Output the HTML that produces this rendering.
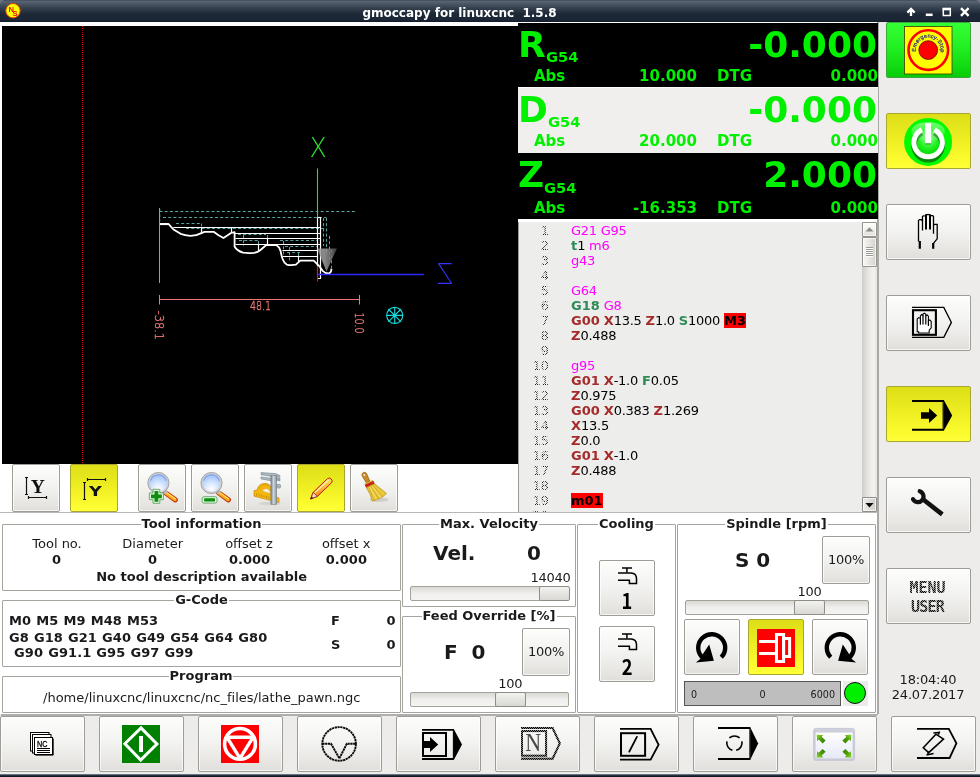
<!DOCTYPE html>
<html lang="en">
<head>
<meta charset="utf-8">
<title>gmoccapy for linuxcnc 1.5.8</title>
<style>
*{box-sizing:border-box;margin:0;padding:0}
html,body{width:980px;height:777px;overflow:hidden;background:#fff}
body{position:relative;will-change:transform;font-family:"DejaVu Sans","Liberation Sans",sans-serif;font-size:13px;color:#1a1a1a;line-height:16px}
.abs{position:absolute}
b,.b{font-weight:bold}
/* title bar */
#titlebar{left:0;top:0;width:980px;height:22px;background:linear-gradient(#3c4757 0,#5a6472 6%,#4a5564 18%,#36414f 36%,#283342 52%,#1c2736 66%,#1b2636 92%,#131b27 100%)}
#title{left:0;top:5px;width:919px;text-align:center;color:#fff;font-weight:bold;font-size:12px;line-height:16px;white-space:pre}
/* right column */
#rightcol{left:879px;top:22px;width:101px;height:693px;background:#edeceb}
#vsep{left:877px;top:22px;width:2px;height:693px;background:#a9a9a6}
#bottomrow{left:0;top:714px;width:980px;height:60px;background:#edeceb}
#bottombar{left:0;top:774px;width:980px;height:3px;background:linear-gradient(#9ba1a8 0,#2c3747 38%,#151d29 70%,#0c1118 100%)}
/* gtk button */
.btn{position:absolute;border:1px solid #9e9d95;border-radius:2px;background:linear-gradient(#fdfdfc 0,#f3f3f1 45%,#e8e7e4 80%,#dfdeda 100%);box-shadow:inset 0 0 0 1px rgba(255,255,255,.7)}
.btn.yel{background:linear-gradient(#dede18 0,#eded22 45%,#fbfb2e 85%,#ffff3a 100%);border-color:#a8a830;box-shadow:none}
.btn.grn{background:linear-gradient(#35ff35 0,#22f022 45%,#0fd80f 85%,#08cc08 100%);border-color:#3aa83a;box-shadow:none}
.btn svg{position:absolute;overflow:visible}
/* GL canvas */
#gl{left:2px;top:26px;width:516px;height:438px;background:#000}
/* DRO */
.dro{left:518px;width:360px;height:66px;color:#00f000;font-weight:bold}
.dro .ax{left:0px;top:1px;font-size:36px;line-height:40px}
.dro .sys{top:25px;font-size:14.67px;line-height:18px}
.dro .big{right:1px;top:1px;font-size:36px;line-height:40px;text-align:right}
.dro .sm{top:44px;font-size:15px;line-height:17px}
/* source view */
#src{left:518px;top:222px;width:359px;height:290px;background:#ededec;overflow:hidden;border-left:1px solid #9b9a94}
#src .ln{position:absolute;left:0;width:30px;text-align:right;color:transparent;background:repeating-conic-gradient(#222 0 25%,rgba(0,0,0,0) 0 50%) 0 0/2px 2px;-webkit-background-clip:text;background-clip:text;height:15px;line-height:15px;font-size:13px}
#src .tx{position:absolute;left:52px;letter-spacing:-0.26px;height:15px;line-height:15px;font-size:13px;white-space:pre;color:#000}
.mg{color:#f0f}
.br{color:#a52a2a;font-weight:bold;letter-spacing:0}
.gn{color:#2e8b57;font-weight:bold;letter-spacing:0}
.rd{background:#f00;color:#000;font-weight:bold;letter-spacing:0;display:inline-block;height:15px}
/* frames */
.frame{position:absolute;border:1px solid #a6a59d;border-radius:1px}
.flabel{position:absolute;top:-9px;left:0;right:0;text-align:center;height:16px;line-height:16px;font-weight:bold;font-size:13px}
.flabel span{background:#fff;padding:0 1px}
.trough{position:absolute;border:1px solid #a3a299;border-radius:2px;background:linear-gradient(#d9d8d4,#f0efed 50%,#f4f4f2)}
.thumb{position:absolute;top:-1px;height:15px;border:1px solid #8f8e86;border-radius:2px;background:linear-gradient(#f2f2f0,#d9d8d3)}
.stip{color:rgba(0,0,0,.42);background:repeating-conic-gradient(#111 0 25%,rgba(0,0,0,0) 0 50%) 0 0/2px 2px;-webkit-background-clip:text;background-clip:text}
.t{position:absolute;white-space:pre;line-height:16px}
.c{text-align:center}
</style>
</head>
<body>
<div id="titlebar" class="abs"></div>
<div id="title" class="abs">gmoccapy for linuxcnc  1.5.8</div>
<svg class="abs" style="left:0;top:0" width="980" height="22" viewBox="0 0 980 22">
 <path d="M0 0 H4 Q1 0.8 0 4Z" fill="#6b7480"/>
 <path d="M980 0 H976 Q979 0.8 980 4Z" fill="#6b7480"/>
 <circle cx="13" cy="10.7" r="7.2" fill="#ffff00" stroke="#e8380a" stroke-width="1"/>
 <text x="8.6" y="11.6" font-family="Liberation Sans,DejaVu Sans,sans-serif" font-weight="bold" font-size="7.6" fill="#e81010">N</text>
 <text x="12.6" y="15.6" font-family="Liberation Sans,DejaVu Sans,sans-serif" font-weight="bold" font-size="7.6" fill="#e81010">S</text>
 <g stroke="#fff" fill="none">
  <path d="M911 16 V9.6 M907.4 12.6 L911 8.8 L914.6 12.6" stroke-width="2.3" stroke-linejoin="miter"/>
  <path d="M925.8 14.8 H932.6" stroke-width="2.5"/>
  <path d="M943.3 9 H950.3 V15.5 H943.3Z" stroke-width="1.5"/>
  <path d="M942.6 9 H951" stroke-width="2.6"/>
  <path d="M961 8.2 L968.6 15.8 M968.6 8.2 L961 15.8" stroke-width="2.4"/>
 </g>
</svg>
<div id="rightcol" class="abs"></div>
<div id="vsep" class="abs"></div>
<div id="gl" class="abs"><svg width="516" height="438" viewBox="2 26 516 438" style="position:absolute;left:0;top:0" shape-rendering="auto">
 <defs>
  <linearGradient id="cone" x1="0" y1="0" x2="1" y2="0"><stop offset="0" stop-color="#8a8a8a"/><stop offset="0.35" stop-color="#a8a8a8"/><stop offset="1" stop-color="#4a4a4a"/></linearGradient>
 </defs>
 <!-- machine limit dotted line -->
 <path d="M82.5 26 V464" stroke="#e00000" stroke-width="1" stroke-dasharray="1 1" fill="none"/>
 <!-- rapid (dashed cyan) moves -->
 <g stroke="#54a2a2" stroke-width="1" stroke-dasharray="3 2.2" fill="none">
  <path d="M159.5 211.5 H357"/>
  <path d="M163 217.5 H326.5"/>
  <path d="M176 223.5 H201.4"/>
  <path d="M186 228.5 H326"/>
  <path d="M238 234.5 H266"/>
  <path d="M239 240.5 H258 M280 240.5 H318"/>
  <path d="M285 246.5 H318"/>
  <path d="M287 252.5 H300"/>
  <path d="M159.8 209 V221.5"/>
  <path d="M323.5 218 V246 M326.5 218 V252 M329.5 236 V262"/>
  <path d="M201.5 223.5 V227 M243.5 235 V246 M258.5 241 V246 M267.5 235 V239 M283.5 241 V257 M289.5 247 V262 M298.5 253 V257 M320.5 250 V270 M331.5 250 V268"/>
 </g>
 <!-- feed moves (white) -->
 <g stroke="#ffffff" stroke-width="1.2" fill="none" stroke-linejoin="round">
  <path stroke-width="1.8" d="M159.4 223.9 H168.4 L173.5 229.5 L180.6 233.8 Q185 235.4 190.4 235.9 Q196.5 235.6 201.4 233.1 L204.5 231.8 H213.7 L218.5 235.3 L223.5 238 L228 235 L231.4 232.8 L234.6 232.1 V246.5 Q236.5 250.5 243 252.7 Q248.5 253.5 254 252.9 Q258 252 260.2 250.2 L265.7 245.5 L267.1 245.1 H276.3 Q279.5 247 280.6 251 Q281.6 256.5 282.6 259 Q284 262.8 286.7 264.6 Q291 265.6 295.9 264.7 L300.2 260.6 H313.7 L319.8 266.7 L322.4 270.6 Q325 273.4 328.4 273.5 Q331.2 273.2 331.5 268.6"/>
  <path d="M159.4 224.5 H168" />
  <path d="M173.3 227.5 H321"/>
  <path d="M235 233.5 H321"/>
  <path d="M235.5 238.5 H321"/>
  <path d="M235.5 244.5 H321"/>
  <path d="M282.4 250.5 H318"/>
  <path d="M282.6 256.5 H318"/>
  <path d="M201.5 227.5 V233 M231.5 227.5 V232.4 M267.5 239 V245 M258.5 244.7 V251 M298.5 256.3 V261.2"/>
  <path d="M317.5 217.5 V266.5"/>
  <path d="M320.5 217.8 V278.5 H317.5"/>
  <path d="M317.5 217.5 H321"/>
 </g>
 <!-- extents / dimensions -->
 <g stroke="#f27878" stroke-width="1" fill="none">
  <path d="M159.5 208 V283"/>
  <path d="M159.5 299.5 H359.5 M159.5 295 V304.5 M359.5 295 V304.5"/>
 </g>
 <g fill="#f27878" font-family="DejaVu Sans,Liberation Sans,sans-serif" font-weight="200" font-size="11.5" stroke="#f27878" stroke-width="0.35">
  <text x="250" y="310.3" textLength="21" lengthAdjust="spacingAndGlyphs">48.1</text>
  <text transform="translate(154.9 310.6) rotate(90)" textLength="29.4" lengthAdjust="spacingAndGlyphs">-38.1</text>
  <text transform="translate(355.2 312.4) rotate(90)" textLength="21" lengthAdjust="spacingAndGlyphs">10.0</text>
 </g>
 <!-- axes -->
 <path d="M317.5 168.5 V217.2" stroke="#20e820" stroke-width="1.1"/>
 <path d="M317.5 266.5 V281.5" stroke="#f01010" stroke-width="1.2"/>
 <path d="M318 274.5 H423.8" stroke="#2a2aff" stroke-width="1.3"/>
 <text x="318.2" y="156.6" text-anchor="middle" font-family="DejaVu Sans,Liberation Sans,sans-serif" font-weight="200" font-size="26" fill="#30e830" textLength="17.2" lengthAdjust="spacingAndGlyphs">X</text>
 <text transform="translate(444.9 283.6) scale(-1 1)" x="0" y="0" text-anchor="middle" font-family="DejaVu Sans,Liberation Sans,sans-serif" font-weight="200" font-size="27.5" fill="#3434ff" textLength="16" lengthAdjust="spacingAndGlyphs">Z</text>
 <!-- tool cone -->
 <path d="M317.1 248.4 H336.9 L326.5 271.6Z" fill="url(#cone)" opacity="0.82"/>
 <!-- origin marker -->
 <g stroke="#18d8d8" stroke-width="1.1" fill="none">
  <circle cx="394.7" cy="315.4" r="8"/>
  <path d="M394.7 307 V324 M386.3 315.4 H403.1 M388.4 309 L401 321.8 M401 309 L388.4 321.8"/>
 </g>
</svg></div>

<div class="abs dro" style="top:23px;background:#000;height:64px">
 <div class="abs ax" style="top:2px">R</div><div class="abs sys" style="left:28px;top:25px">G54</div><div class="abs big" style="top:2px">-0.000</div>
 <div class="abs sm" style="left:16px;top:45px">Abs</div><div class="abs sm" style="right:181px;top:45px">10.000</div><div class="abs sm" style="left:199px;top:45px">DTG</div><div class="abs sm" style="right:0;top:45px">0.000</div>
</div>
<div class="abs dro" style="top:87px;background:#f1efee;height:66px">
 <div class="abs" style="left:0;top:0;width:360px;height:1px;background:#fff"></div>
 <div class="abs ax" style="top:3px">D</div><div class="abs sys" style="left:30px;top:26px">G54</div><div class="abs big" style="top:3px">-0.000</div>
 <div class="abs sm" style="left:16px;top:46px">Abs</div><div class="abs sm" style="right:181px;top:46px">20.000</div><div class="abs sm" style="left:199px;top:46px">DTG</div><div class="abs sm" style="right:0;top:46px">0.000</div>
</div>
<div class="abs dro" style="top:153px;background:#000;height:66px">
 <div class="abs ax" style="top:2px">Z</div><div class="abs sys" style="left:26px;top:26px">G54</div><div class="abs big" style="top:2px">2.000</div>
 <div class="abs sm" style="left:16px;top:47px">Abs</div><div class="abs sm" style="right:181px;top:47px">-16.353</div><div class="abs sm" style="left:199px;top:47px">DTG</div><div class="abs sm" style="right:0;top:47px">0.000</div>
</div>
<div id="src" class="abs">
 <div class="ln" style="top:1px">1</div><div class="tx" style="top:1px"><span class="mg">G21 G95</span></div>
 <div class="ln" style="top:16px">2</div><div class="tx" style="top:16px"><span class="gn">t</span>1 <span class="mg">m6</span></div>
 <div class="ln" style="top:31px">3</div><div class="tx" style="top:31px"><span class="mg">g43</span></div>
 <div class="ln" style="top:46px">4</div><div class="tx" style="top:46px"></div>
 <div class="ln" style="top:61px">5</div><div class="tx" style="top:61px"><span class="mg">G64</span></div>
 <div class="ln" style="top:76px">6</div><div class="tx" style="top:76px"><span class="gn">G18</span> <span class="mg">G8</span></div>
 <div class="ln" style="top:91px">7</div><div class="tx" style="top:91px"><span class="br">G00</span> <span class="br">X</span>13.5 <span class="br">Z</span>1.0 <span class="gn">S</span>1000 <span class="rd">M3</span></div>
 <div class="ln" style="top:106px">8</div><div class="tx" style="top:106px"><span class="br">Z</span>0.488</div>
 <div class="ln" style="top:121px">9</div><div class="tx" style="top:121px"></div>
 <div class="ln" style="top:136px">10</div><div class="tx" style="top:136px"><span class="mg">g95</span></div>
 <div class="ln" style="top:151px">11</div><div class="tx" style="top:151px"><span class="br">G01</span> <span class="br">X</span>-1.0 <span class="gn">F</span>0.05</div>
 <div class="ln" style="top:166px">12</div><div class="tx" style="top:166px"><span class="br">Z</span>0.975</div>
 <div class="ln" style="top:181px">13</div><div class="tx" style="top:181px"><span class="br">G00</span> <span class="br">X</span>0.383 <span class="br">Z</span>1.269</div>
 <div class="ln" style="top:196px">14</div><div class="tx" style="top:196px"><span class="br">X</span>13.5</div>
 <div class="ln" style="top:211px">15</div><div class="tx" style="top:211px"><span class="br">Z</span>0.0</div>
 <div class="ln" style="top:226px">16</div><div class="tx" style="top:226px"><span class="br">G01</span> <span class="br">X</span>-1.0</div>
 <div class="ln" style="top:241px">17</div><div class="tx" style="top:241px"><span class="br">Z</span>0.488</div>
 <div class="ln" style="top:256px">18</div><div class="tx" style="top:256px"></div>
 <div class="ln" style="top:271px">19</div><div class="tx" style="top:271px"><span class="rd">m01</span></div>
 <div class="ln" style="top:286px">20</div><div class="tx" style="top:286px"></div>
</div>

<div id="sb" class="abs" style="left:862px;top:222px;width:15px;height:290px;background:linear-gradient(90deg,#cfcecb,#e9e8e5 45%,#f4f3f1 80%,#e4e3e0)">
 <div class="btn" style="left:0;top:0;width:15px;height:15px;border-radius:1px;border-color:#96958d"><svg width="15" height="15" style="left:-1px;top:-1px"><path d="M3.5 9.6 L11.5 9.6 L7.5 5.2Z" fill="#8c8c86"/></svg></div>
 <div class="btn" style="left:0;top:15px;width:15px;height:30px;border-radius:1px;border-color:#96958d;background:linear-gradient(90deg,#f8f8f6,#e6e5e1 50%,#d3d2cd)"><svg width="15" height="30" style="left:-1px;top:-1px"><path d="M4 10.5h7M4 12.5h7M4 14.5h7M4 16.5h7M4 18.5h7" stroke="#9c9b95" stroke-width="1"/><path d="M4 11.5h7M4 13.5h7M4 15.5h7M4 17.5h7M4 19.5h7" stroke="#fff" stroke-width="1"/></svg></div>
 <div class="btn" style="left:0;top:275px;width:15px;height:15px;border-radius:1px;border-color:#8f8d89;background:linear-gradient(90deg,#eeedeb,#dcdbd7 55%,#cfcecb)"><svg width="15" height="15" style="left:-1px;top:-1px"><path d="M3.4 5.9 L11.6 5.9 L7.5 10.4Z" fill="#0a0a0a"/></svg></div>
</div>


<div class="abs" style="left:0;top:512px;width:878px;height:1px;background:#b9b8b2"></div>
<div class="btn" style="left:12px;top:464px;width:48px;height:48px"></div>
<div class="btn yel" style="left:70px;top:464px;width:48px;height:48px"></div>
<div class="btn" style="left:138px;top:464px;width:48px;height:48px"></div>
<div class="btn" style="left:191px;top:464px;width:48px;height:48px"></div>
<div class="btn" style="left:244px;top:464px;width:48px;height:48px"></div>
<div class="btn yel" style="left:297px;top:464px;width:48px;height:48px"></div>
<div class="btn" style="left:350px;top:464px;width:48px;height:48px"></div>
<svg class="abs" style="left:0;top:464px" width="410" height="48" viewBox="0 464 410 48">
 <defs>
  <radialGradient id="lens" cx="0.5" cy="0.8" r="0.85"><stop offset="0" stop-color="#ffffff"/><stop offset="0.35" stop-color="#dbe9ff"/><stop offset="0.75" stop-color="#a9c8fb"/><stop offset="1" stop-color="#86a8ee"/></radialGradient>
  <linearGradient id="hand" x1="0" y1="0" x2="1" y2="0"><stop offset="0" stop-color="#d9d9d9"/><stop offset="0.28" stop-color="#f6d9a0"/><stop offset="0.3" stop-color="#ffb52e"/><stop offset="0.8" stop-color="#f57900"/><stop offset="1" stop-color="#ce3d0c"/></linearGradient>
  <linearGradient id="steel" x1="0" y1="0" x2="1" y2="0"><stop offset="0" stop-color="#71808c"/><stop offset="0.45" stop-color="#cdd5da"/><stop offset="1" stop-color="#87939c"/></linearGradient>
  <linearGradient id="pen" x1="0" y1="0" x2="0" y2="1"><stop offset="0" stop-color="#fce94f"/><stop offset="0.5" stop-color="#fcaf3e"/><stop offset="1" stop-color="#f57900"/></linearGradient>
 </defs>
 <!-- icon 1: Y serif with I-beam and dimension line -->
 <g stroke="#111" stroke-width="1.2" fill="none">
  <path d="M26.5 477.5v17M25 477.5h3M25 494.5h3"/>
  <path d="M28.5 497.5h18M28.5 496v3M46.5 496v3"/>
 </g>
 <text x="37.7" y="493" text-anchor="middle" font-family="Liberation Serif,DejaVu Serif,serif" font-weight="bold" font-size="19.5" fill="#111">Y</text>
 <!-- icon 2 -->
 <g stroke="#111" stroke-width="1.2" fill="none">
  <path d="M84.5 482.5v17M83 482.5h3M83 499.5h3"/>
  <path d="M87.5 479.5h18M87.5 478v3M105.5 478v3"/>
 </g>
 <text transform="translate(95.5 495.7) scale(1.22 1)" text-anchor="middle" font-family="DejaVu Sans,Liberation Sans,sans-serif" font-weight="bold" font-size="14.5" fill="#111">Y</text>
 <!-- zoom in -->
 <g id="mag">
  <path d="M165.8 493 L175.3 499.8" stroke="#c2380e" stroke-width="5.2" stroke-linecap="round"/>
  <path d="M166 493.1 L175.1 499.6" stroke="#fba91e" stroke-width="3.2" stroke-linecap="round"/>
  <path d="M166.6 492.6 L175.4 498.9" stroke="#ffe36a" stroke-width="1.1" stroke-linecap="round"/>
  <path d="M163.6 490.6 L166.6 493" stroke="#bdbdbd" stroke-width="3.8"/>
  <circle cx="158.4" cy="483" r="9.7" fill="url(#lens)" stroke="#cfcfcf" stroke-width="1.7"/>
  <circle cx="158.4" cy="483" r="10.6" fill="none" stroke="#8a8a8a" stroke-width="0.7"/>
  <path d="M150.6 480.6 A8.2 8.2 0 0 1 166.2 480.6" fill="none" stroke="#7d9fe9" stroke-width="1.3" opacity="0.85"/>
 </g>
 <path d="M153.00 489.30 H159.80 V492.90 H163.40 V499.70 H159.80 V503.30 H153.00 V499.70 H149.40 V492.90 H153.00Z" fill="#e4f2e0" stroke="#4f9e4f" stroke-width="0.8" stroke-linejoin="round"/>
 <path d="M154.50 490.90 H158.30 V494.40 H161.80 V498.20 H158.30 V501.70 H154.50 V498.20 H151.00 V494.40 H154.50Z" fill="#0d900d"/>
 <!-- zoom out -->
 <use href="#mag" x="53.1"/>
 <rect x="202.1" y="496.7" width="14.9" height="6.4" rx="1.8" fill="#e4f2e0" stroke="#4f9e4f" stroke-width="0.8"/>
 <rect x="204.1" y="498.3" width="10.9" height="3.1" rx="0.6" fill="#0d900d"/>
 <!-- caliper + protractor -->
 <g>
  <ellipse cx="270" cy="503.5" rx="11" ry="1.8" fill="#d4d3cf"/>
  <path d="M254 490.6 L257 490 Q258 484.6 263.5 483.4 Q268 482.6 271 486.5 L271 495.6 L279 498 L279 502.6 L254 496.2 Z" fill="#f4b60e" stroke="#c98c08" stroke-width="0.7"/>
  <path d="M262.2 491.2 Q263.4 488.4 266.5 488.6 Q269.8 489.2 270.9 493.8 Z" fill="#f4f3f0" stroke="#d79a0a" stroke-width="0.5"/>
  <path d="M256.5 493.4v2.2M259 494v2.2M261.5 494.7v2.2M264 495.3v2.2M266.5 496v2.2M269 496.6v2.2M259.2 487.6l1 .8M261 485.6l.8 1.1M263.4 484.4l.4 1.2M266 484.2l0 1.2M268.4 485l-.5 1.1" stroke="#b57d06" stroke-width="0.7" fill="none"/>
  <path d="M261 472.6 L275.6 473.6 L280 475.6 L280 477.2 L270.9 476.3 L261 474.7Z" fill="#aeb9c1" stroke="#76838d" stroke-width="0.6"/>
  <path d="M261 476.9 L271 478.3 L271 480.8 L261 478.9Z" fill="#aeb9c1" stroke="#76838d" stroke-width="0.6"/>
  <path d="M276.4 477.7 L280 478.3 L280 480.9 L276.4 480.3Z" fill="#9aa6ae" stroke="#76838d" stroke-width="0.5"/>
  <circle cx="278.7" cy="486.2" r="2.1" fill="#a9b2b9" stroke="#7d8890" stroke-width="0.5"/>
  <rect x="270.9" y="475.4" width="5.8" height="29" fill="url(#steel)" stroke="#6a7882" stroke-width="0.5"/>
 </g>
 <!-- pencil -->
 <g>
  <path d="M310.6 499 L313.2 492.3 L327.6 478.6 Q329.6 477.4 331.2 479 Q332.8 480.8 331.7 482.6 L317.4 496.4 Z" fill="url(#pen)" stroke="#c01818" stroke-width="1"/>
  <path d="M314.6 493 L328.6 479.8" stroke="#fff3b0" stroke-width="1.2"/>
  <path d="M310.6 499 L313.2 492.3 L317.4 496.4 Z" fill="#f0d9b8" stroke="#a81c1c" stroke-width="0.8"/>
  <path d="M310.6 499 L311.6 496.4 L313.2 498 Z" fill="#222"/>
 </g>
 <!-- broom -->
 <g>
  <ellipse cx="379" cy="499.6" rx="9.5" ry="2.4" fill="#cfcecb"/>
  <path d="M362.4 473.4 Q364.4 471.4 366.4 473.2 L369.8 481.2 L366.4 482.8 L362.4 476.4 Q361.4 474.8 362.4 473.4Z" fill="#c98a2a" stroke="#96620e" stroke-width="0.8"/>
  <circle cx="364.3" cy="475" r="1" fill="#f6ead0"/>
  <path d="M364.8 483.6 L372.8 480.2 L373.6 482 L365.8 485.6Z" fill="#e8c030" stroke="#b8901c" stroke-width="0.4"/>
  <path d="M365.2 485 L373.2 481.4 L374.4 484 L366.6 487.8Z" fill="#d81c1c" stroke="#a00c0c" stroke-width="0.6"/>
  <path d="M366.4 487.6 L374.4 483.8 L386.4 493.4 Q381.5 498.8 372.4 501 Q370.4 493.6 366.4 487.6Z" fill="#ecc93c" stroke="#b8921c" stroke-width="0.8"/>
  <path d="M368.6 487.4L374.2 500M370.8 486.4L378.6 498.6M372.8 485.4L382.6 496.4" stroke="#c9a326" stroke-width="0.8" fill="none"/>
  <path d="M369.8 487L376.4 499.4M372 486L380.8 497.6" stroke="#f8e88a" stroke-width="0.7" fill="none"/>
 </g>
</svg>

<div class="frame" style="left:2px;top:524px;width:399px;height:67px"><div class="flabel"><span>Tool information</span></div></div>
<div class="t c " style="left:-43.0px;top:536px;width:200px;">Tool no.</div>
<div class="t c " style="left:52.69999999999999px;top:536px;width:200px;">Diameter</div>
<div class="t c " style="left:149.0px;top:536px;width:200px;">offset z</div>
<div class="t c " style="left:246.2px;top:536px;width:200px;">offset x</div>
<div class="t c b" style="left:-43.5px;top:552px;width:200px;">0</div>
<div class="t c b" style="left:52.5px;top:552px;width:200px;">0</div>
<div class="t c b" style="left:149.6px;top:552px;width:200px;">0.000</div>
<div class="t c b" style="left:246.39999999999998px;top:552px;width:200px;">0.000</div>
<div class="t c b" style="left:51.599999999999994px;top:569px;width:300px;">No tool description available</div>
<div class="frame" style="left:2px;top:600px;width:399px;height:67px"><div class="flabel"><span>G-Code</span></div></div>
<div class="t b" style="left:9px;top:613px;word-spacing:0.5px;letter-spacing:0.07px">M0 M5 M9 M48 M53</div>
<div class="t b" style="left:9px;top:630px;word-spacing:0.5px;letter-spacing:0.07px">G8 G18 G21 G40 G49 G54 G64 G80</div>
<div class="t b" style="left:9px;top:645px;word-spacing:0.5px;letter-spacing:0.07px"> G90 G91.1 G95 G97 G99</div>
<div class="t b" style="left:331px;top:613px;">F</div>
<div class="t b" style="left:355.5px;top:613px;width:40px;text-align:right;">0</div>
<div class="t b" style="left:331px;top:637px;">S</div>
<div class="t b" style="left:355.5px;top:637px;width:40px;text-align:right;">0</div>
<div class="frame" style="left:2px;top:676px;width:399px;height:37px"><div class="flabel" style="left:-1px"><span>Program</span></div></div>
<div class="t c " style="left:11.7px;top:690px;width:380px;letter-spacing:0.01px">/home/linuxcnc/linuxcnc/nc_files/lathe_pawn.ngc</div>
<div class="frame" style="left:402px;top:524px;width:174px;height:83px"><div class="flabel"><span>Max. Velocity</span></div></div>
<div class="t b" style="left:433px;top:541px;font-size:20px;line-height:24px">Vel.</div>
<div class="t b" style="left:527px;top:541px;font-size:20px;line-height:24px">0</div>
<div class="t " style="left:510.5px;top:570px;width:60px;text-align:right;letter-spacing:-0.27px">14040</div>
<div class="trough" style="left:410px;top:586px;width:159px;height:15px"><div class="thumb" style="left:128px;width:31px"></div></div>
<div class="frame" style="left:402px;top:616px;width:174px;height:97px"><div class="flabel"><span>Feed Override [%]</span></div></div>
<div class="t b" style="left:444px;top:640px;font-size:20px;line-height:24px">F  0</div>
<div class="btn" style="left:522px;top:628px;width:48px;height:48px"><div class="t c" style="left:0;top:15px;width:46px;letter-spacing:-0.27px">100%</div></div>
<div class="t c " style="left:480.3px;top:676px;width:60px;letter-spacing:-0.27px">100</div>
<div class="trough" style="left:410px;top:692px;width:159px;height:15px"><div class="thumb" style="left:84px;width:31px"></div></div>
<div class="frame" style="left:577px;top:524px;width:99px;height:189px"><div class="flabel"><span>Cooling</span></div></div>
<div class="btn" style="left:599px;top:560px;width:56px;height:56px"></div>
<div class="btn" style="left:599px;top:626px;width:56px;height:56px"></div>
<div class="frame" style="left:677px;top:524px;width:199px;height:189px"><div class="flabel"><span>Spindle [rpm]</span></div></div>
<div class="t b" style="left:735px;top:548px;font-size:20px;line-height:24px">S 0</div>
<div class="btn" style="left:822px;top:536px;width:48px;height:48px"><div class="t c" style="left:0;top:15px;width:46px;letter-spacing:-0.27px">100%</div></div>
<div class="t c " style="left:779.4px;top:584px;width:60px;letter-spacing:-0.27px">100</div>
<div class="trough" style="left:685px;top:600px;width:184px;height:15px"><div class="thumb" style="left:108px;width:31px"></div></div>
<div class="btn" style="left:684px;top:619px;width:56px;height:56px"></div>
<div class="btn yel" style="left:748px;top:619px;width:56px;height:56px"></div>
<div class="btn" style="left:812px;top:619px;width:56px;height:56px"></div>
<div class="abs" style="left:757px;top:629px;width:38px;height:38px;background:#f00"></div>
<div class="abs" style="left:684px;top:681px;width:157px;height:25px;background:#bebebe;border:1px solid #555;font-size:9.6px;line-height:12px"><div class="t" style="left:6px;top:7px;line-height:12px">0</div><div class="t c" style="left:57.5px;top:7px;width:40px;line-height:12px">0</div><div class="t" style="right:5px;top:7px;line-height:12px">6000</div></div>
<div class="abs" style="left:843px;top:681px;width:25px;height:25px;background:#ebebea"></div>
<div class="abs" style="left:844px;top:682px;width:22px;height:22px;border-radius:50%;background:#00f000;border:1.3px solid #111"></div>

<div class="btn grn" style="left:886px;top:22px;width:85px;height:56px"></div>
<div class="btn yel" style="left:886px;top:113px;width:85px;height:56px"></div>
<div class="btn " style="left:886px;top:204px;width:85px;height:56px"></div>
<div class="btn " style="left:886px;top:295px;width:85px;height:56px"></div>
<div class="btn yel" style="left:886px;top:386px;width:85px;height:56px"></div>
<div class="btn " style="left:886px;top:477px;width:85px;height:56px"></div>
<div class="btn " style="left:886px;top:568px;width:85px;height:56px"></div>
<div class="t c" style="left:885px;top:578.5px;width:85px;font-family:'DejaVu Sans Mono','Liberation Mono',monospace;font-weight:bold;font-size:15px;line-height:19px;height:19px" ><span class="stip">MENU</span></div>
<div class="t c" style="left:885px;top:597.5px;width:85px;letter-spacing:-0.8px;font-family:'DejaVu Sans Mono','Liberation Mono',monospace;font-weight:bold;font-size:15px;line-height:19px;height:19px"><span class="stip">USER</span></div>
<div class="t c" style="left:878px;top:672px;width:100px;line-height:15px;letter-spacing:-0.2px">18:04:40<br>24.07.2017</div>
<svg class="abs" style="left:880px;top:22px" width="100" height="610" viewBox="880 22 100 610">
 <defs>
  <radialGradient id="pg" cx="0.5" cy="0.35" r="0.7"><stop offset="0" stop-color="#8cff8c"/><stop offset="0.55" stop-color="#22f022"/><stop offset="1" stop-color="#00d800"/></radialGradient>
  <linearGradient id="hl" x1="0" y1="0" x2="0" y2="1"><stop offset="0" stop-color="#fff" stop-opacity="0.75"/><stop offset="1" stop-color="#fff" stop-opacity="0.15"/></linearGradient>
  <path id="arc" d="M916 51.6 A12.4 12.4 0 1 1 939.5 55.3"/>
 </defs>
 <!-- E-stop -->
 <rect x="904.5" y="26.5" width="47.5" height="47.5" fill="#ffff00" stroke="#3a3a00" stroke-width="0.8"/>
 <circle cx="928.3" cy="50.1" r="19.8" fill="none" stroke="#ff0000" stroke-width="2.6"/>
 <circle cx="928.2" cy="50.1" r="9.4" fill="#ff0000" stroke="#400" stroke-width="0.7"/>
 <text font-family="Liberation Sans,DejaVu Sans,sans-serif" font-size="5.5" fill="#20208c" stroke="#20208c" stroke-width="0.2"><textPath href="#arc" startOffset="0" textLength="42.5" lengthAdjust="spacing">Emergency-Stop</textPath></text>
 <!-- power -->
 <circle cx="928.1" cy="141.9" r="24" fill="#00fa00"/>
 <circle cx="928.1" cy="142.5" r="11.8" fill="url(#pg)"/>
 <path d="M921.9 131.4 A14.2 14.2 0 1 0 934.3 131.4" fill="none" stroke="#0a6a0a" stroke-width="5" transform="translate(0 1.6)" opacity="0.8"/>
 <path d="M921.9 129.7 A14.2 14.2 0 1 0 934.3 129.7" fill="none" stroke="#fff" stroke-width="5"/>
 <rect x="925" y="123.2" width="6.1" height="20.2" fill="#fff"/>
 <rect x="925" y="143.4" width="6.1" height="1" fill="#0a7a0a" opacity="0.7"/>
 <ellipse cx="928.1" cy="131.5" rx="16.8" ry="9.6" fill="url(#hl)" opacity="0.6"/>
 <!-- hand -->
 <g id="hand" fill="none" stroke="#000" stroke-width="1.3" stroke-linejoin="miter">
  <path d="M918.5 241.5 V220.6 L919.6 219.6 H921 L922.4 220.6"/>
  <path d="M922.5 230.5 V216.6 L923.4 215.8 H924.8"/>
  <path d="M926 214.6 V229.6 M930 214.6 V229.6" stroke-width="2"/>
  <path d="M925.5 214.6 H930.5"/>
  <path d="M930.8 215.7 H932.7 L933.5 216.5 V233.8"/>
  <path d="M933.6 225 L934.4 224.4 H937.2 V238.8 L933.6 243.2"/>
  <path d="M919.8 241 V248.8 M933.2 243 V248.8" stroke-width="2.2"/>
 </g>
 <!-- hand in box -->
 <path d="M912 307.4 H943.8 L951.4 322.4 L943.8 337.4 H912" fill="none" stroke="#000" stroke-width="1.3"/>
 <rect x="913" y="310.2" width="22.9" height="24.6" fill="#f2f2f1" stroke="#000" stroke-width="2.1"/>
 <g fill="#fff" stroke="#000" stroke-width="1.1">
  <path d="M917.2 331.8 V319 L918.6 317.6 L920.4 318.4 V316 L921.6 314.6 L923 315.6 V314 L924.4 313.2 L925.8 314.2 V315.6 L927.2 315 L928.4 316.2 V320.8 L929.8 320 L931.2 321.4 V327.8 L929.2 330.2 V333 H918.6 V331.8Z"/>
  <path d="M920.4 318.4 V324.8 M923 315.6 V324.4 M925.8 315.6 V324.4 M928.4 320.8 V326" stroke-width="1.2"/>
 </g>
 <!-- arrow in box (big) -->
 <path d="M912 401 H944 M912 429.8 H944" stroke="#000" stroke-width="2" fill="none"/>
 <path d="M943.2 401 V430" stroke="#000" stroke-width="1.2"/>
 <path d="M943.8 400 L952.2 415.4 L943.8 430.8Z" fill="#000"/>
 <path d="M921 412.3 H929 V408 L937.2 415.4 L929 423 V418.7 H921Z" fill="#000"/>
 <!-- wrench -->
 <path d="M919.7 491.2 A5.6 5.6 0 1 1 913 499.2" fill="none" stroke="#111" stroke-width="4.2" stroke-linecap="round"/>
 <path d="M923.6 499.8 L942.3 514.4" stroke="#111" stroke-width="4.6"/>
</svg>

<svg class="abs" style="left:596px;top:556px" width="280" height="130" viewBox="596 556 280 130">
 <g id="tap" fill="none" stroke="#000" stroke-width="1.5">
  <path d="M622 568 H632 M626.9 568 V572.6"/>
  <path d="M618 572.9 H631 Q636.5 573.2 636.5 578.6 V583.6 H629.4 V580.3 H618"/>
 </g>
 <use href="#tap" y="66"/>
 <text transform="translate(626.8 608.8) scale(0.86 1)" text-anchor="middle" font-family="Noto Sans CJK SC,Liberation Sans,sans-serif" font-weight="bold" font-size="21.3" fill="#000">1</text>
 <text transform="translate(627.2 674.9) scale(0.86 1)" text-anchor="middle" font-family="Noto Sans CJK SC,Liberation Sans,sans-serif" font-weight="bold" font-size="21.3" fill="#000">2</text>
 <!-- spindle reverse -->
 <g id="rev">
  <path d="M721.3 657.2 A13.5 13.5 0 1 0 701.2 656.2" fill="none" stroke="#000" stroke-width="4.4"/>
  <path d="M695.9 662.6 L713.9 660.8 L709.2 644.6 L702.9 654 L699 656.5 L700.5 658.8Z" fill="#000"/>
 </g>
 <use href="#rev" transform="translate(1552 0) scale(-1 1)"/>
 <!-- spindle stop -->
 <g fill="none" stroke="#fff" stroke-width="3">
  <path d="M759 641.5 H776 M759 653.5 H776"/>
  <rect x="776.5" y="634.5" width="7.1" height="27"/>
  <rect x="783.6" y="638.5" width="6" height="18"/>
 </g>
</svg>
<div id="bottomrow" class="abs"></div>
<div id="bottombar" class="abs"></div>
<div class="abs" style="left:1px;top:714px;width:877px;height:2px;background:#aeaeac;border-bottom-right-radius:2px"></div>
<div class="btn" style="left:0px;top:716px;width:85px;height:56px"></div>
<div class="btn" style="left:99px;top:716px;width:85px;height:56px"></div>
<div class="btn" style="left:198px;top:716px;width:85px;height:56px"></div>
<div class="btn" style="left:297px;top:716px;width:85px;height:56px"></div>
<div class="btn" style="left:396px;top:716px;width:85px;height:56px"></div>
<div class="btn" style="left:495px;top:716px;width:85px;height:56px"></div>
<div class="btn" style="left:594px;top:716px;width:85px;height:56px"></div>
<div class="btn" style="left:693px;top:716px;width:85px;height:56px"></div>
<div class="btn" style="left:792px;top:716px;width:85px;height:56px"></div>
<div class="btn" style="left:891px;top:716px;width:85px;height:56px"></div>
<svg class="abs" style="left:0;top:716px" width="980" height="56" viewBox="0 716 980 56">
 <defs>
  <pattern id="stp" width="2" height="2" patternUnits="userSpaceOnUse"><rect x="0" y="0" width="1" height="1" fill="#000"/><rect x="1" y="1" width="1" height="1" fill="#000"/></pattern>
  <linearGradient id="ga" x1="0" y1="0" x2="1" y2="1"><stop offset="0" stop-color="#8ae234"/><stop offset="0.5" stop-color="#4e9a06"/><stop offset="1" stop-color="#2e7a00"/></linearGradient>
  <linearGradient id="win" x1="0" y1="0" x2="0" y2="1"><stop offset="0" stop-color="#ffffff"/><stop offset="1" stop-color="#e6e8f6"/></linearGradient>
 </defs>
 <!-- 1 NC pages -->
 <g stroke="#000" stroke-width="1" fill="#fff">
  <rect x="30.5" y="732.5" width="18.5" height="18.5"/>
  <rect x="32.5" y="734.5" width="18.5" height="18.5"/>
  <rect x="34.5" y="737.5" width="18" height="17"/>
 </g>
 <path d="M53.2 738.5 V755.1 H35.5" stroke="#000" stroke-width="1" fill="none"/>
 <path d="M37 748.5 H50 M37 750.5 H50 M37 752.5 H50" stroke="#000" stroke-width="1"/>
 <text transform="translate(37 746.8) scale(0.8 1)" font-family="Liberation Sans,DejaVu Sans,sans-serif" font-size="9" fill="#000" stroke="#000" stroke-width="0.3">NC</text>
 <!-- 2 cycle start -->
 <rect x="122" y="725" width="38" height="38" fill="#008000"/>
 <path d="M141 727.9 L156.9 744 L140.7 760 L124.9 743.7Z" fill="none" stroke="#fff" stroke-width="3"/>
 <rect x="139" y="736" width="4" height="16" fill="#fff"/>
 <!-- 3 stop -->
 <rect x="221" y="725" width="38" height="38" fill="#ff0000"/>
 <circle cx="240" cy="743.9" r="15.4" fill="none" stroke="#fff" stroke-width="3.6"/>
 <path d="M226.9 737.2 H253.1 L240 758.4Z" fill="none" stroke="#fff" stroke-width="3.4" stroke-linejoin="round"/>
 <!-- 4 circle V (stippled) -->
 <g fill="none" stroke="#0a0a0a" stroke-width="1.9" stroke-dasharray="2.3 0.55">
  <circle cx="339.1" cy="743.9" r="16.8"/>
  <path d="M322.3 743.7 H331 L339.4 758.4 L346.8 743.7 H356"/>
 </g>
 <!-- 5 arrow in box -->
 <path d="M422 729.9 H454 M422 759 H454" stroke="#000" stroke-width="1.9"/>
 <path d="M453.4 730 V759" stroke="#000" stroke-width="1.1"/>
 <path d="M453.8 729 L462 744.4 L453.8 760Z" fill="#000"/>
 <rect x="423" y="733" width="23" height="23" fill="none" stroke="#000" stroke-width="2"/>
 <path d="M422 741 H430 V736.9 L438.2 744.4 L430 752 V748 H422Z" fill="#000"/>
 <!-- 6 N box stippled -->
 <g fill="none" stroke="#000" stroke-opacity="0.5" stroke-width="1.9">
  <path d="M521 728 H552.6 L559.8 743.3 L552.6 758.7 H521"/>
  <rect x="522" y="731.1" width="24.1" height="24.6"/>
 </g>
 <g fill="none" stroke="url(#stp)" stroke-width="2">
  <path d="M521 728 H552.6 L559.8 743.3 L552.6 758.7 H521"/>
  <rect x="522" y="731.1" width="24.1" height="24.6"/>
 </g>
 <text transform="translate(533.2 751) scale(0.9 1)" text-anchor="middle" font-family="Liberation Serif,DejaVu Serif,serif" font-size="24.5" fill="#2a2a2a" opacity="0.85">N</text>
 <!-- 7 slash box -->
 <path d="M620 728.9 H650.6 L658.6 744.8 L650.6 759.7 H620" fill="none" stroke="#000" stroke-width="1.8"/>
 <rect x="621" y="733.2" width="24.1" height="22.6" fill="none" stroke="#000" stroke-width="2"/>
 <path d="M629.3 751.6 L636.9 736.9" stroke="#000" stroke-width="1.8" stroke-linecap="round"/>
 <!-- 8 optional stop -->
 <path d="M718 728 H750.4 M718 759 H750.4" stroke="#000" stroke-width="1.8"/>
 <path d="M749.9 728 V759" stroke="#000" stroke-width="1.1"/>
 <path d="M750.2 727.3 L758.2 743.5 L750.2 759.8Z" fill="#000"/>
 <g fill="none" stroke="#000" stroke-width="1.6">
  <path d="M729.4 737.9 A7.6 7.6 0 0 1 739.6 737.9"/>
  <path d="M726.9 741.4 A7.6 7.6 0 0 0 732.4 750.3"/>
  <path d="M741.9 741.4 A7.6 7.6 0 0 1 736.2 750.3"/>
 </g>
 <!-- 9 fullscreen -->
 <rect x="813.6" y="728.4" width="41" height="32" rx="2.2" fill="#c9cad8" stroke="#c2c4d4" stroke-width="0.8"/>
 <rect x="815.6" y="732.6" width="37" height="26" rx="1" fill="url(#win)"/>
 <rect x="814.4" y="729" width="39.4" height="2.6" fill="#cfd0dc"/>
 <g fill="url(#ga)">
  <path id="far" d="M816.6 734.6 L823.2 735.2 L821.6 736.8 L825.6 740.6 L822.6 743.4 L818.8 739.6 L817.2 741.2Z"/>
  <use href="#far" transform="translate(1668 0) scale(-1 1)"/>
  <use href="#far" transform="translate(0 1492.4) scale(1 -1)"/>
  <use href="#far" transform="translate(1668 1492.4) scale(-1 -1)"/>
 </g>
 <!-- 10 tool -->
 <path d="M917 728.9 H948.8 L956.4 743.3 L949.6 758 H917" fill="none" stroke="#000" stroke-width="1.8"/>
 <path d="M923.3 747.8 L935.9 734.2 L943.5 739.2 L928.7 752.6Z" fill="none" stroke="#000" stroke-width="1.6"/>
 <path d="M933.4 733 L938.6 732.6 M939.6 731.4 L938.4 734.8 M926.4 755 L933.6 753.6 M928.4 751.6 L927.6 755.4" stroke="#000" stroke-width="1.5" fill="none"/>
</svg>

</body>
</html>
